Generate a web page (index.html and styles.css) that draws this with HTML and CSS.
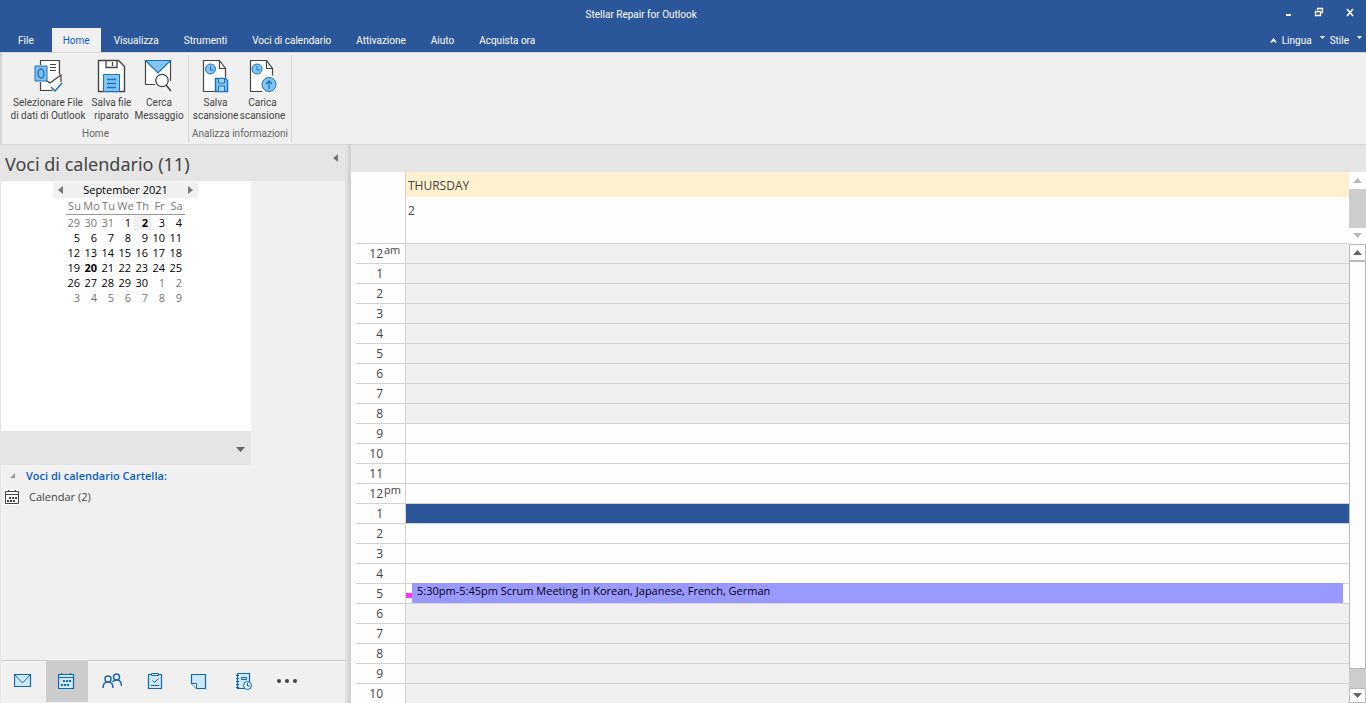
FILE: index.html
```html
<!DOCTYPE html>
<html lang="it">
<head>
<meta charset="utf-8">
<title>Stellar Repair for Outlook</title>
<link rel="stylesheet" href="styles.css">
</head>
<body>
<div class="app">
  <header class="top">
    <div class="titlebar">
      <h1 class="app-title">Stellar Repair for Outlook</h1>
      <div class="window-controls">
        <button type="button" aria-label="Minimize"><svg width="10" height="10" viewBox="0 0 10 10"><path d="M3 7h5v2H3z" fill="#fff"/></svg></button>
        <button type="button" aria-label="Restore"><svg width="10" height="10" viewBox="0 0 10 10"><path d="M3.500 3V1.500h5v4H7M3 1.500h6M1.500 4.500h5v4h-5zM1 4.500h6" fill="none" stroke="#fff" stroke-width="1.300"/></svg></button>
        <button type="button" aria-label="Close"><svg width="10" height="10" viewBox="0 0 10 10"><path d="M2 2l6 7M8 2L2 9" fill="none" stroke="#fff" stroke-width="1.600"/></svg></button>
      </div>
    </div>
    <div class="menu-row">
      <nav class="tabs">
        <button type="button" class="tab file">File</button>
        <button type="button" class="tab active">Home</button>
        <button type="button" class="tab">Visualizza</button>
        <button type="button" class="tab">Strumenti</button>
        <button type="button" class="tab">Voci di calendario</button>
        <button type="button" class="tab">Attivazione</button>
        <button type="button" class="tab">Aiuto</button>
        <button type="button" class="tab">Acquista ora</button>
      </nav>
      <div class="options">
        <button type="button" class="option"><svg width="7" height="5" viewBox="0 0 7 5"><path d="M0 4.500L3.500 0 7 4.500H5L3.500 3 2 4.500z" fill="#fff"/></svg>Lingua<svg class="drop" width="5" height="3" viewBox="0 0 5 3"><path d="M0 0h5L2.500 3z" fill="#fff"/></svg></button>
        <button type="button" class="option">Stile<svg class="drop" width="5" height="3" viewBox="0 0 5 3"><path d="M0 0h5L2.500 3z" fill="#fff"/></svg></button>
      </div>
    </div>
  </header>

  <section class="ribbon">
    <div class="group">
      <div class="tools">
        <button type="button" class="tool wide">
          <svg width="34" height="34" viewBox="0 0 34 34"><path d="M9 2h18v28H9z" fill="#fff"/><path d="M9.500 6V1.500h19v14M9.500 23v8.500h12" fill="none" stroke="#444" stroke-width="1.200"/><path d="M19 5.500h6M19 8.500h6M19 11.500h6M13 20l6 4 11-8v7" fill="none" stroke="#444" stroke-width="1.200"/><path d="M4 7h12v15H4z" fill="#83beec" stroke="#1673b9"/><ellipse cx="10" cy="14.500" rx="3" ry="4.500" fill="none" stroke="#1673b9" stroke-width="1.300"/><path d="M20 28l4 4 7-8" fill="none" stroke="#1673b9" stroke-width="1.500"/></svg>
          <span>Selezionare File<br>di dati di Outlook</span>
        </button>
        <button type="button" class="tool">
          <svg width="34" height="34" viewBox="0 0 34 34"><path d="M3.500 1.500h20l6 6v25h-26z" fill="#fff" stroke="#444" stroke-width="1.400"/><path d="M11 1.500v7h11v-7M17.500 3v4" fill="none" stroke="#444" stroke-width="1.300"/><path d="M8.500 15.500h16v17h-16z" fill="#83c4f3" stroke="#1673b9"/><path d="M12 20.500h9M12 24.500h9M12 28.500h9" stroke="#1673b9" stroke-width="1.300"/></svg>
          <span>Salva file<br>riparato</span>
        </button>
        <button type="button" class="tool mid">
          <svg width="34" height="34" viewBox="0 0 34 34"><path d="M3 2h26v24H3z" fill="#fff"/><path d="M3.500 2v23.500H13M28.500 2v20" fill="none" stroke="#444" stroke-width="1.200"/><path d="M3.500 1.500h25L16 14z" fill="#83c4f3" stroke="#1673b9" stroke-width="1.200"/><circle cx="20" cy="21.500" r="6.200" fill="#fff" stroke="#444" stroke-width="1.300"/><path d="M24 26l5 6" stroke="#444" stroke-width="1.500"/></svg>
          <span>Cerca<br>Messaggio</span>
        </button>
      </div>
      <h2 class="group-name">Home</h2>
    </div>
    <div class="group second">
      <div class="tools">
        <button type="button" class="tool">
          <svg width="34" height="34" viewBox="0 0 34 34"><path d="M4.500 1.500h16l6 8v23h-22z" fill="#fff"/><path d="M16 32.500H4.500v-31h16l6 8v9M20.500 1.500v8h6" fill="none" stroke="#444" stroke-width="1.200"/><circle cx="11.500" cy="10" r="5" fill="#83c4f3" stroke="#1673b9"/><path d="M11.500 7v4h3" fill="none" stroke="#1673b9"/><path d="M16.500 19.500h10l2 2v11h-12z" fill="#83c4f3" stroke="#1673b9" stroke-width="1.400"/><path d="M19.500 20v4h6v-4M19.500 32v-5h6v5" fill="#a9d6f6" stroke="#1673b9"/></svg>
          <span>Salva<br>scansione</span>
        </button>
        <button type="button" class="tool">
          <svg width="34" height="34" viewBox="0 0 34 34"><path d="M4.500 1.500h16l6 8v23h-22z" fill="#fff"/><path d="M16 32.500H4.500v-31h16l6 8v7M20.500 1.500v8h6" fill="none" stroke="#444" stroke-width="1.200"/><circle cx="11" cy="10" r="5" fill="#83c4f3" stroke="#1673b9"/><path d="M11 7v4h3" fill="none" stroke="#1673b9"/><circle cx="23" cy="25.500" r="7" fill="#83c4f3" stroke="#1673b9"/><path d="M23 30v-8M20 25l3-3 3 3" fill="none" stroke="#1673b9" stroke-width="1.300"/></svg>
          <span>Carica<br>scansione</span>
        </button>
      </div>
      <h2 class="group-name">Analizza informazioni</h2>
    </div>
  </section>

  <main class="body">
    <aside class="sidebar">
      <div class="side-head">
        <h2>Voci di calendario (11)</h2>
        <button type="button" aria-label="Collapse"><svg width="5" height="8" viewBox="0 0 5 8"><path d="M5 0v8L0 4z" fill="#777"/></svg></button>
      </div>
      <div class="picker">
        <div class="month">
          <button type="button" aria-label="Previous month"><svg width="5" height="8" viewBox="0 0 5 8"><path d="M5 0v8L0 4z" fill="#777"/></svg></button>
          <span>September 2021</span>
          <button type="button" aria-label="Next month"><svg width="5" height="8" viewBox="0 0 5 8"><path d="M0 0v8l5-4z" fill="#777"/></svg></button>
        </div>
        <table class="days">
          <thead><tr><th>Su</th><th>Mo</th><th>Tu</th><th>We</th><th>Th</th><th>Fr</th><th>Sa</th></tr></thead>
          <tbody>
            <tr><td class="out">29</td><td class="out">30</td><td class="out">31</td><td>1</td><td class="sel">2</td><td>3</td><td>4</td></tr>
            <tr><td>5</td><td>6</td><td>7</td><td>8</td><td>9</td><td>10</td><td>11</td></tr>
            <tr><td>12</td><td>13</td><td>14</td><td>15</td><td>16</td><td>17</td><td>18</td></tr>
            <tr><td>19</td><td class="busy">20</td><td>21</td><td>22</td><td>23</td><td>24</td><td>25</td></tr>
            <tr><td>26</td><td>27</td><td>28</td><td>29</td><td>30</td><td class="out">1</td><td class="out">2</td></tr>
            <tr><td class="out">3</td><td class="out">4</td><td class="out">5</td><td class="out">6</td><td class="out">7</td><td class="out">8</td><td class="out">9</td></tr>
          </tbody>
        </table>
      </div>
      <button type="button" class="more-bar" aria-label="Expand"><svg width="9" height="5" viewBox="0 0 9 5"><path d="M0 0h9L4.500 5z" fill="#666"/></svg></button>
      <div class="tree">
        <h3><svg width="5" height="5" viewBox="0 0 5 5"><path d="M5 0v5H0z" fill="#999"/></svg>Voci di calendario Cartella:</h3>
        <a href="#" class="leaf"><svg width="16" height="16" viewBox="0 0 16 16"><path d="M0 0h16v16H0z" fill="#fff"/><path d="M1.500 2.500h13v12h-13zM1 5.500h14M4.500 1v2M11.500 1v2" fill="none" stroke="#444"/><path d="M5 8h2v2H5zM8 8h2v2H8zM11 8h2v2h-2zM3 11h2v2H3zM6 11h2v2H6zM9 11h2v2H9z" fill="#444"/></svg>Calendar (2)</a>
      </div>
      <nav class="modules">
        <button type="button" aria-label="Mail"><svg width="18" height="18" viewBox="0 0 18 18"><path d="M.5 2.500h16v12H.5z" fill="#cfe8fc" stroke="#0f67b1" stroke-width="1.200"/><path d="M1 3l7.500 8L16 3" fill="none" stroke="#0f67b1"/></svg></button>
        <button type="button" class="current" aria-label="Calendar"><svg width="18" height="18" viewBox="0 0 18 18"><path d="M.5 2.500h15v14H.5z" fill="#cfe8fc"/><path d="M.5 2.500h15v14H.5zM0 5.500h16M3.500 1v2M12.500 1v2" fill="none" stroke="#0f67b1" stroke-width="1.200"/><path d="M5 8h2v2H5zM8 8h2v2H8zM11 8h2v2h-2zM3 12h2v2H3zM6 12h2v2H6zM9 12h2v2H9z" fill="#0f67b1"/></svg></button>
        <button type="button" aria-label="People"><svg width="22" height="18" viewBox="0 0 22 18"><g fill="none" stroke="#1f69a8" stroke-width="1.500"><circle cx="8" cy="7" r="3"/><path d="M3 16c0-4 2-6 5-6s5 2 5 6"/><circle cx="16.500" cy="5" r="3"/><path d="M12.500 10c1-1 2-2 4-2 3 0 5 2 5 6"/></g></svg></button>
        <button type="button" aria-label="Tasks"><svg width="18" height="18" viewBox="0 0 18 18"><path d="M2.500 2.500h13v14h-13z" fill="#cfe8fc" stroke="#0f67b1" stroke-width="1.200"/><path d="M5.500 1.500h7v2h-7z" fill="#e8f4fd" stroke="#0f67b1"/><path d="M6.500 8.500l2 2 4-4M5 13.500h8" fill="none" stroke="#0f67b1"/></svg></button>
        <button type="button" aria-label="Notes"><svg width="18" height="18" viewBox="0 0 18 18"><path d="M1.500 2.500h14v14h-9l-5-5z" fill="#cfe8fc" stroke="#0f67b1" stroke-width="1.200"/><path d="M1.500 11.500h5v5" fill="#fff" stroke="#0f67b1"/></svg></button>
        <button type="button" aria-label="Journal"><svg width="18" height="18" viewBox="0 0 18 18"><path d="M3.500 1.500h12v15h-12z" fill="#cfe8fc" stroke="#0f67b1" stroke-width="1.200"/><path d="M2 3.500h3M2 6.500h3M2 9.500h3M2 12.500h3M2 15.500h3M7.500 5.500h5v2h-5z" fill="none" stroke="#0f67b1"/><circle cx="13.500" cy="13.500" r="4" fill="#e3f1fc" stroke="#0f67b1"/><path d="M13.500 11v3H16" fill="none" stroke="#0f67b1"/></svg></button>
        <button type="button" aria-label="More"><svg width="22" height="18" viewBox="0 0 22 18"><g fill="#444"><circle cx="3" cy="9" r="2"/><circle cx="11" cy="9" r="2"/><circle cx="19" cy="9" r="2"/></g></svg></button>
      </nav>
    </aside>
    <div class="splitter"></div>
    <section class="schedule">
      <div class="day-head">
        <div class="day-names">
          <div class="day-name">THURSDAY</div>
          <div class="day-number">2</div>
        </div>
        <div class="bar head-bar">
          <button type="button" aria-label="Scroll up"><svg width="9" height="5" viewBox="0 0 9 5"><path d="M0 5h9L4.500 0z" fill="#bbb"/></svg></button>
          <div class="thumb"></div>
          <button type="button" aria-label="Scroll down"><svg width="9" height="5" viewBox="0 0 9 5"><path d="M0 0h9L4.500 5z" fill="#bbb"/></svg></button>
        </div>
      </div>
      <div class="day-body">
        <div class="hours-area">
          <table class="hours">
            <tbody>
              <tr class="off"><th>12<sup>am</sup></th><td></td></tr>
              <tr class="off"><th>1</th><td></td></tr>
              <tr class="off"><th>2</th><td></td></tr>
              <tr class="off"><th>3</th><td></td></tr>
              <tr class="off"><th>4</th><td></td></tr>
              <tr class="off"><th>5</th><td></td></tr>
              <tr class="off"><th>6</th><td></td></tr>
              <tr class="off"><th>7</th><td></td></tr>
              <tr class="off"><th>8</th><td></td></tr>
              <tr><th>9</th><td></td></tr>
              <tr><th>10</th><td></td></tr>
              <tr><th>11</th><td></td></tr>
              <tr><th>12<sup>pm</sup></th><td></td></tr>
              <tr class="picked"><th>1</th><td></td></tr>
              <tr><th>2</th><td></td></tr>
              <tr><th>3</th><td></td></tr>
              <tr><th>4</th><td></td></tr>
              <tr class="booked"><th>5</th><td><div class="slot"><i class="mark"></i><div class="event">5:30pm-5:45pm Scrum Meeting in Korean, Japanese, French, German</div></div></td></tr>
              <tr class="off"><th>6</th><td></td></tr>
              <tr class="off"><th>7</th><td></td></tr>
              <tr class="off"><th>8</th><td></td></tr>
              <tr class="off"><th>9</th><td></td></tr>
              <tr class="off"><th>10</th><td></td></tr>
            </tbody>
          </table>
        </div>
        <div class="bar body-bar">
          <button type="button" aria-label="Scroll up"><svg width="9" height="5" viewBox="0 0 9 5"><path d="M0 5h9L4.500 0z" fill="#666"/></svg></button>
          <div class="thumb"></div>
          <button type="button" aria-label="Scroll down"><svg width="9" height="5" viewBox="0 0 9 5"><path d="M0 0h9L4.500 5z" fill="#666"/></svg></button>
        </div>
      </div>
    </section>
  </main>
</div>
</body>
</html>
```
FILE: styles.css
```css
* { box-sizing: border-box; }
body { margin: 0; font-family: "Open Sans", "Noto Sans", sans-serif; font-size: 11px; color: #444; }
button { margin: 0; padding: 0; border: 0; background: none; font: inherit; color: inherit; }
h1, h2, h3 { margin: 0; font-weight: 400; }
svg { display: block; flex: none; }
table { border-collapse: separate; border-spacing: 0; }

.app { display: flex; flex-direction: column; height: 100vh; overflow: hidden; background: #f0f0f0; }

.top { background: #2b579a; color: #fff; font-family: Roboto, "Noto Sans", sans-serif; font-size: 10px; }
.titlebar { display: grid; grid-template-columns: 7fr auto 8fr; align-items: center; height: 28px; }
.app-title { grid-column: 2; font-size: 10px; }
.window-controls { display: flex; justify-content: flex-end; gap: 21px; padding: 0 11px 4px 0; }
.menu-row { display: flex; justify-content: space-between; height: 24px; }
.tabs { display: flex; }
.tab { padding: 0 11px 0 12px; border: 1px solid transparent; border-bottom: 0; white-space: nowrap; }
.tab.file { padding: 0 17px; }
.tab.active { padding: 0 10px; background: #f0f0f0; color: #0a5dc2; }
.options { display: flex; gap: 5px; padding-right: 4px; }
.option { display: flex; align-items: center; gap: 5px; }
.drop { margin: 0 0 6px 3px; }

.ribbon { display: flex; flex: none; height: 93px; padding: 2px 0 2px 6px; border: 1px solid #d5d5d5; border-width: 1px 0 1px 2px; font-family: Roboto, "Noto Sans", sans-serif; font-size: 10px; }
.group { display: flex; flex-direction: column; justify-content: space-between; padding-right: 5px; border-right: 1px solid #d5d5d5; }
.group.second { padding: 0 3px; }
.tools { display: flex; }
.tool { display: flex; flex-direction: column; align-items: center; gap: 3px; width: 47px; padding-top: 4px; line-height: 13px; white-space: nowrap; }
.tool.wide { width: 80px; }
.tool.mid { width: 48px; }
.group-name { font-size: 10px; line-height: 17px; color: #666; text-align: center; white-space: nowrap; }

.body { display: flex; flex: 1; min-height: 0; }
.sidebar { display: flex; flex-direction: column; width: 345px; border-left: 1px solid #e5e5e5; }
.side-head { display: flex; justify-content: space-between; align-items: flex-start; height: 36px; padding: 5px 7px 0 4px; background: #e5e5e5; }
.side-head h2 { font-family: "Noto Sans", sans-serif; font-size: 18px; line-height: 28px; }
.side-head button { padding: 4px 0; }
.picker { width: 250px; height: 250px; padding-top: 1px; background: #fff; color: #000; }
.month { display: flex; align-items: center; justify-content: space-between; width: 145px; height: 16px; margin-left: 52px; padding: 0 5px; background: #f0f0f0; line-height: 16px; }
.days { table-layout: fixed; width: 119px; margin-left: 65px; line-height: 15px; }
.days th, .days td { height: 15px; padding: 0 3px 0 0; text-align: right; font-weight: 400; }
.days th { padding: 0; text-align: center; vertical-align: top; color: #777; border-bottom: 1px solid #999; }
.days thead { height: 17px; }
.days td.out { color: #777; }
.days td.sel { background: #f0f0f0; font-weight: 700; }
.days td.busy { font-weight: 700; }
.more-bar { display: flex; align-items: center; justify-content: flex-end; width: 250px; height: 34px; padding: 2px 6px 0 0; background: #e5e5e5; }
.tree { flex: 1; }
.tree h3 { display: flex; align-items: center; gap: 11px; height: 21px; padding-left: 9px; font-size: 11px; font-weight: 600; color: #0a5dc2; }
.leaf { display: flex; align-items: center; gap: 9px; height: 21px; padding-left: 3px; color: #444; text-decoration: none; }
.modules { display: flex; gap: 2px; flex: none; height: 43px; padding: 0 1px 1px; border-top: 1px solid #cfcfcf; }
.modules button { display: flex; align-items: center; justify-content: center; width: 42px; padding-bottom: 2px; }
.modules .current { background: #ccc; }

.splitter { width: 6px; background: #e0e0e0; border-right: 3px solid #d2d2d2; }

.schedule { display: flex; flex: 1; flex-direction: column; min-width: 0; border-top: 27px solid #e5e5e5; background: #fdfdfd; }
.day-head { display: flex; flex: none; height: 71px; }
.day-names { flex: 1; margin-left: 54px; border-left: 1px solid #d2d2d2; font-size: 12px; }
.day-name { height: 25px; padding-left: 2px; line-height: 27px; background: #fff0cf; }
.day-number { padding-left: 2px; line-height: 27px; }
.bar { display: flex; flex-direction: column; flex: none; width: 17px; }
.bar button { display: flex; align-items: center; justify-content: center; flex: none; height: 17px; }
.bar button:last-child { height: 15px; }
.bar .thumb { flex: 1; }
.head-bar .thumb { background: #cdcdcd; }
.day-body { display: flex; flex: 1; min-height: 0; }
.hours-area { flex: 1; min-width: 0; overflow: hidden; padding-left: 5px; }
.hours { width: 100%; table-layout: fixed; font-size: 12px; }
.hours th { position: relative; width: 50px; height: 20px; padding: 0 22px 0 0; border-top: 1px solid #d2d2d2; border-right: 1px solid #d2d2d2; text-align: right; font-weight: 400; line-height: 19px; }
.hours sup { position: absolute; left: 28px; top: -2px; font-size: 11px; line-height: 16px; }
.hours td { height: 20px; padding: 0; border-top: 1px solid #d2d2d2; }
.off td { background: #efefef; }
.picked td { background: #2b579a; }
.slot { display: flex; align-items: center; height: 19px; padding-right: 6px; background: #fff; }
.mark { width: 6px; height: 5px; margin-top: 4px; background: #f3f; }
.event { flex: 1; height: 20px; margin-top: -1px; padding-left: 5px; background: #99f; color: #000; line-height: 16px; font-size: 11px; white-space: nowrap; overflow: hidden; }
.body-bar { margin-top: 1px; background: #cdcdcd; }
.body-bar button, .body-bar .thumb { border: 1px solid #bbb; background: #fdfdfd; }
.body-bar .thumb { margin-bottom: 19px; }
```
